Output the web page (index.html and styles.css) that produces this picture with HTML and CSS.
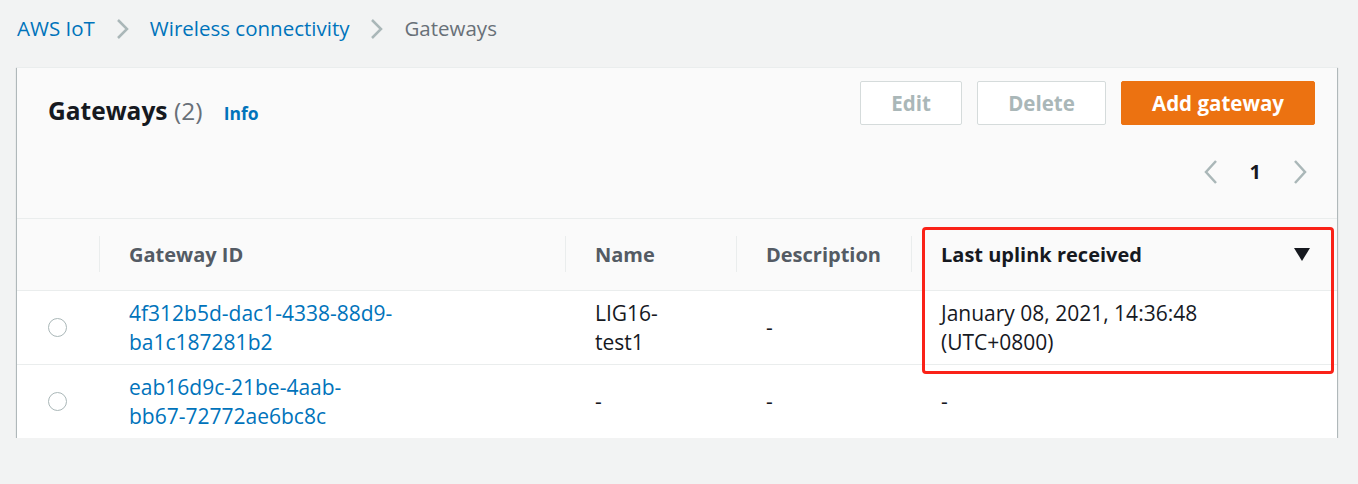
FILE: index.html
```html
<!doctype html>
<html lang="en">
<head>
    <meta charset="utf-8">
    <title>Gateways</title>
    <link rel="stylesheet" href="styles.css">
</head>
<body>

    <nav class="crumbs">
        <a href="#">AWS IoT</a>
        <span class="sep"><svg width="14" height="22" viewBox="0 0 14 22"><path d="M2 2l9 9-9 9" fill="none" stroke="#aab7b8" stroke-width="2.5"/></svg></span>
        <a href="#">Wireless connectivity</a>
        <span class="sep"><svg width="14" height="22" viewBox="0 0 14 22"><path d="M2 2l9 9-9 9" fill="none" stroke="#aab7b8" stroke-width="2.5"/></svg></span>
        <span class="current">Gateways</span>
    </nav>

    <div class="panel">
        <div class="panel-head">
            <div class="head-top">
                <h1 class="title">Gateways <span class="count">(2)</span> <a href="#" class="info">Info</a></h1>
                <div class="actions">
                    <button class="btn btn-edit" disabled>Edit</button>
                    <button class="btn btn-delete" disabled>Delete</button>
                    <button class="btn btn-primary">Add gateway</button>
                </div>
            </div>
            <div class="pager">
                <svg width="16" height="26" viewBox="0 0 16 26"><path d="M13 2L3 13l10 11" fill="none" stroke="#aab7b8" stroke-width="2.5"/></svg>
                <span class="page">1</span>
                <svg width="16" height="26" viewBox="0 0 16 26"><path d="M3 2l10 11-10 11" fill="none" stroke="#aab7b8" stroke-width="2.5"/></svg>
            </div>
        </div>

        <table class="grid">
            <colgroup>
                <col style="width: 82px">
                <col style="width: 466px">
                <col style="width: 171px">
                <col style="width: 175px">
                <col>
            </colgroup>
            <thead>
                <tr>
                    <th></th>
                    <th class="split">Gateway ID</th>
                    <th class="split">Name</th>
                    <th class="split">Description</th>
                    <th class="split sorted">Last uplink received <span class="caret"></span></th>
                </tr>
            </thead>
            <tbody>
                <tr>
                    <td><span class="radio"></span></td>
                    <td><a href="#">4f312b5d-dac1-4338-88d9-<br>ba1c187281b2</a></td>
                    <td>LIG16-<br>test1</td>
                    <td>-</td>
                    <td>January 08, 2021, 14:36:48<br>(UTC+0800)</td>
                </tr>
                <tr>
                    <td><span class="radio"></span></td>
                    <td><a href="#">eab16d9c-21be-4aab-<br>bb67-72772ae6bc8c</a></td>
                    <td>-</td>
                    <td>-</td>
                    <td>-</td>
                </tr>
            </tbody>
        </table>

        <div class="highlight"></div>
    </div>

</body>
</html>
```

FILE: styles.css
```css
html {
    width: 100%;
    height: 100%;
}

body {
    margin: 0;
    padding: 0 21px 0 17px;
    font-family: 'Open Sans', sans-serif;
    font-size: 21px;
    line-height: 29px;
    background-color: #f2f3f3;
    color: #16191f;
}

a {
    color: #0073bb;
    text-decoration: none;
}

.crumbs {
    display: flex;
    align-items: center;
    height: 57px;
    font-size: 20.5px;
}

.crumbs .sep {
    display: flex;
    margin: 0 20px 0 21px;
}

.crumbs .current {
    color: #687078;
}

.panel {
    position: relative;
    margin-top: 10px;
    background-color: #fff;
    box-shadow: 0 1px 1px 0 rgba(0, 28, 36, .5), 1px 1px 1px 0 rgba(0, 28, 36, .2), -1px 1px 1px 0 rgba(0, 28, 36, .2);
    border-top: 1px solid #eaeded;
}

.panel-head {
    background-color: #fafafa;
    padding: 13px 22px 0 31px;
    height: 137px;
    border-bottom: 1px solid #eaeded;
}

.head-top {
    display: flex;
    justify-content: space-between;
    align-items: flex-start;
}

.title {
    margin: 15px 0 0;
    font-size: 24.5px;
    line-height: 30px;
    font-weight: 700;
}

.title .count {
    font-weight: 400;
    color: #687078;
}

.title .info {
    margin-left: 15px;
    font-size: 17.5px;
    font-weight: 700;
}

.actions {
    display: flex;
    gap: 15px;
}

.btn {
    height: 44px;
    padding: 0;
    font-family: inherit;
    font-size: 20.5px;
    font-weight: 700;
    border-radius: 2px;
    border: 1px solid #d5dbdb;
    background-color: #fff;
    color: #aab7b8;
}

.btn-edit {
    width: 102px;
}

.btn-delete {
    width: 129px;
}

.btn-primary {
    width: 194px;
    background-color: #ec7211;
    border-color: #ec7211;
    color: #fff;
}

.pager {
    display: flex;
    justify-content: flex-end;
    align-items: center;
    gap: 31px;
    margin-top: 29px;
    padding-right: 7px;
}

.pager .page {
    font-weight: 700;
    font-size: 20px;
}

.grid {
    width: 100%;
    border-collapse: collapse;
    table-layout: fixed;
}

.grid th {
    position: relative;
    height: 71px;
    padding: 0 20px 0 30px;
    text-align: left;
    font-size: 20px;
    font-weight: 700;
    color: #545b64;
    background-color: #fafafa;
    border-bottom: 1px solid #eaeded;
}

.grid th.split::before {
    content: "";
    position: absolute;
    left: 0;
    top: 17px;
    bottom: 18px;
    border-left: 1px solid #eaeded;
}

.grid th.sorted {
    color: #16191f;
}

.caret {
    position: absolute;
    right: 27px;
    top: 29px;
    border-left: 8px solid transparent;
    border-right: 8px solid transparent;
    border-top: 13px solid #16191f;
}

.grid td {
    height: 73px;
    padding: 0 20px 0 30px;
    border-bottom: 1px solid #eaeded;
    vertical-align: middle;
}

.grid tr:last-child td {
    border-bottom: none;
}

.grid td:first-child {
    padding: 0 0 0 31px;
}

.radio {
    display: block;
    width: 17px;
    height: 17px;
    border: 1.5px solid #aab7b8;
    border-radius: 50%;
}

.highlight {
    position: absolute;
    left: 905px;
    top: 159px;
    width: 406px;
    height: 141px;
    border: 3px solid #fa2218;
    border-radius: 4px;
}
```
